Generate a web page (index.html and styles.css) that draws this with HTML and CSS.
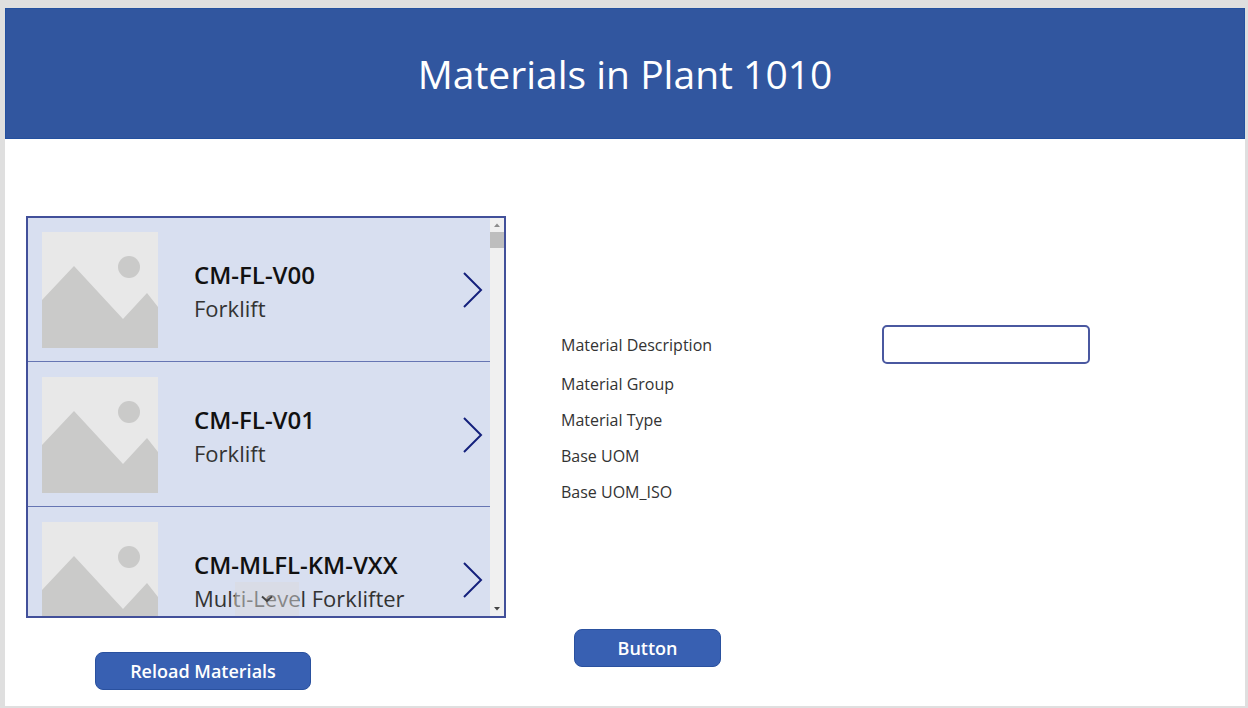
FILE: index.html
```html
<!DOCTYPE html>
<html lang="en">
<head>
<meta charset="utf-8">
<meta name="viewport" content="width=device-width, initial-scale=1">
<title>Materials in Plant 1010</title>
<link rel="stylesheet" href="styles.css">
</head>
<body>
<svg class="defs" aria-hidden="true">
  <symbol id="placeholder" viewBox="0 0 116 116">
    <rect width="116" height="116" fill="#e8e8e8"/>
    <circle cx="87" cy="35" r="11" fill="#cacac9"/>
    <path d="M0 68 32 34 81 87 105 61 116 75V116H0Z" fill="#cacac9"/>
  </symbol>
  <symbol id="chevron" viewBox="0 0 20 36">
    <path d="M1 1 18 18 1 35" fill="none" stroke="#14207c" stroke-width="2"/>
  </symbol>
</svg>
<div class="app">
  <header class="header"><h1 class="title">Materials in Plant 1010</h1></header>
  <main class="main">
    <section class="side">
      <div class="gallery">
        <ul class="list">
          <li class="item">
            <svg class="thumb" aria-hidden="true"><use href="#placeholder"/></svg>
            <div class="info"><h2 class="code">CM-FL-V00</h2><p class="name">Forklift</p></div>
            <button class="open" type="button" aria-label="Open CM-FL-V00"><svg class="chevron"><use href="#chevron"/></svg></button>
          </li>
          <li class="item">
            <svg class="thumb" aria-hidden="true"><use href="#placeholder"/></svg>
            <div class="info"><h2 class="code">CM-FL-V01</h2><p class="name">Forklift</p></div>
            <button class="open" type="button" aria-label="Open CM-FL-V01"><svg class="chevron"><use href="#chevron"/></svg></button>
          </li>
          <li class="item">
            <svg class="thumb" aria-hidden="true"><use href="#placeholder"/></svg>
            <div class="info"><h2 class="code">CM-MLFL-KM-VXX</h2><p class="name">Multi-Level Forklifter</p></div>
            <button class="open" type="button" aria-label="Open CM-MLFL-KM-VXX"><svg class="chevron"><use href="#chevron"/></svg></button>
          </li>
        </ul>
        <div class="scrollbar" aria-hidden="true">
          <svg class="arrow" viewBox="0 0 14 14"><path d="M4 9 7 5.500 10 9Z" fill="#8c8c8c"/></svg>
          <div class="track"><div class="handle"></div></div>
          <svg class="arrow" viewBox="0 0 14 14"><path d="M4 5 7 8.500 10 5Z" fill="#444"/></svg>
        </div>
        <button class="more" type="button" aria-label="Scroll down"><svg class="more-icon" viewBox="0 0 12 8"><path d="M1 1.500 6 6 11 1.500" fill="none" stroke="#444" stroke-width="2"/></svg></button>
      </div>
      <button class="button reload" type="button">Reload Materials</button>
    </section>
    <section class="details">
      <div class="fields">
        <div class="field first">
          <label class="label" for="description">Material Description</label>
          <input class="input" id="description" type="text">
        </div>
        <div class="field"><span class="label">Material Group</span></div>
        <div class="field"><span class="label">Material Type</span></div>
        <div class="field"><span class="label">Base UOM</span></div>
        <div class="field"><span class="label">Base UOM_ISO</span></div>
      </div>
      <button class="button submit" type="button">Button</button>
    </section>
  </main>
</div>
</body>
</html>
```
FILE: styles.css
```css
* { box-sizing: border-box; }

body {
  margin: 0;
  background: #dfdfdf;
  font-family: "Open Sans", "Noto Sans", sans-serif;
  color: #333;
}

h1, h2, p, ul { margin: 0; padding: 0; }

.defs { display: none; }

.app {
  display: flex;
  flex-direction: column;
  min-height: 100vh;
  padding: 8px 3px 2px 5px;
}

.header {
  display: flex;
  align-items: center;
  justify-content: center;
  padding: 38px 16px;
  border: 1px solid #23509f;
  background: #31569f;
}

.title {
  font-size: 39px;
  font-weight: 400;
  line-height: 53px;
  color: #fff;
}

.main {
  flex: 1;
  display: grid;
  grid-template-columns: minmax(0, 480fr) minmax(0, 684fr);
  gap: 55px;
  padding: 77px 0 16px 21px;
  background: #fff;
}

.side, .details {
  display: flex;
  flex-direction: column;
  align-items: flex-start;
}

.gallery {
  position: relative;
  display: flex;
  width: 100%;
  height: 402px;
  overflow: hidden;
  border: 2px solid #42509a;
  background: #d8dff0;
}

.list {
  flex: 1;
  margin-top: -1px;
  list-style: none;
}

.item {
  display: flex;
  align-items: center;
  padding: 15px 7px 13px 14px;
  border-bottom: 1px solid #6675b3;
}

.thumb { width: 116px; height: 116px; flex: none; }

.info { flex: 1; padding: 2px 0 0 36px; }

.code {
  font-size: 24px;
  font-weight: 600;
  line-height: 33px;
  color: #111;
}

.name {
  font-size: 22px;
  line-height: 34px;
  color: #333;
}

.open {
  display: flex;
  padding: 0;
  border: 0;
  background: none;
}

.chevron { width: 20px; height: 36px; }

.scrollbar {
  display: flex;
  flex-direction: column;
  width: 14px;
  background: #f0f0f0;
}

.arrow { width: 14px; height: 14px; }

.track { flex: 1; }

.handle { height: 16px; background: #bebebe; }

.more {
  position: absolute;
  bottom: 0;
  left: 207px;
  display: flex;
  align-items: center;
  justify-content: center;
  width: 64px;
  height: 34px;
  padding: 0;
  border: 0;
  background: rgba(218, 218, 220, 0.5);
}

.more-icon { width: 12px; height: 8px; }

.button {
  height: 38px;
  border: 1px solid #2a519f;
  border-radius: 8px;
  background: #3860b2;
  font-family: inherit;
  font-size: 18px;
  font-weight: 600;
  line-height: 24px;
  color: #fff;
}

.reload { width: 216px; margin: 34px 0 0 69px; }

.submit { width: 147px; margin: 119px 0 0 13px; }

.fields { width: 100%; padding-top: 107px; }

.field {
  display: grid;
  grid-template-columns: 321fr 208fr 155fr;
  align-items: center;
  min-height: 36px;
}

.first { min-height: 43px; }

.label { font-size: 16px; line-height: 24px; }

.input {
  width: 100%;
  height: 39px;
  padding: 4px 8px;
  border: 2px solid #4a58a0;
  border-radius: 5px;
  background: #fff;
  font: inherit;
}
```
